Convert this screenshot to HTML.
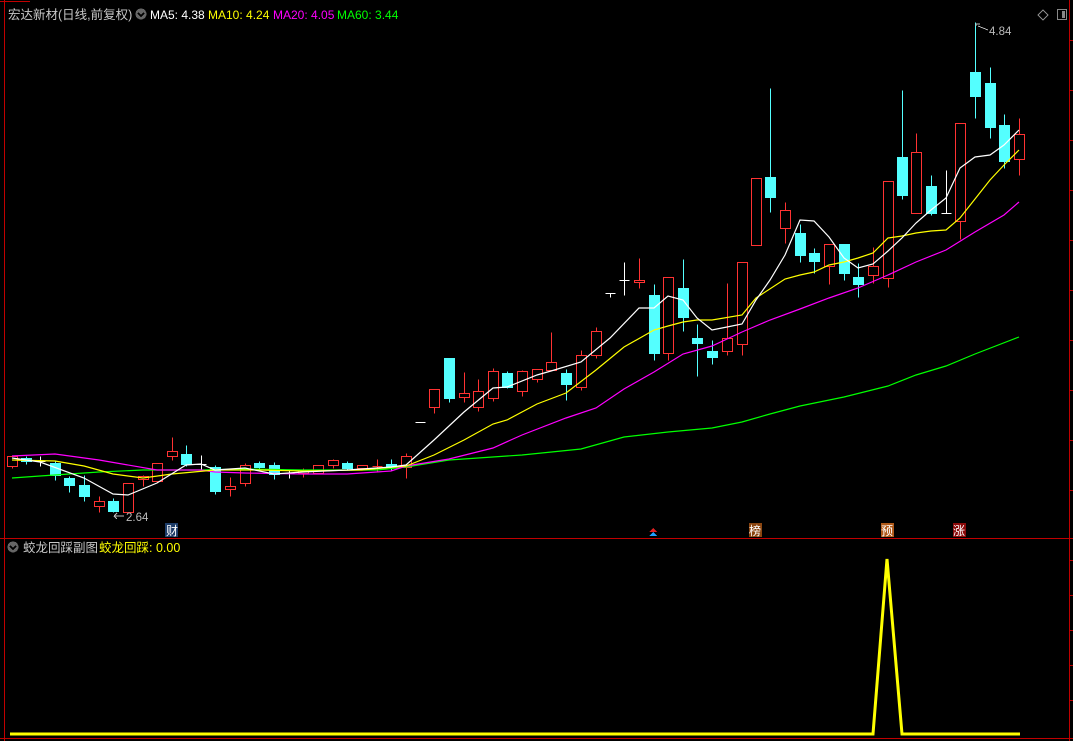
<!DOCTYPE html>
<html><head><meta charset="utf-8"><style>
html,body{margin:0;padding:0;background:#000;width:1073px;height:741px;overflow:hidden}
svg{display:block}
text{font-family:"Liberation Sans","Noto Sans CJK SC",sans-serif}
.r{stroke:#ff3232;fill:none;stroke-width:1}
.rf{stroke:#ff3232;fill:#000;stroke-width:1}
.c{fill:#54ffff;stroke:#54ffff;stroke-width:1}
.w{stroke:#fff;fill:none;stroke-width:1}
</style></head><body>
<svg width="1073" height="741" viewBox="0 0 1073 741" xmlns="http://www.w3.org/2000/svg" shape-rendering="crispEdges">
<rect width="1073" height="741" fill="#000"/>
<line x1="4.5" y1="0" x2="4.5" y2="741" stroke="#c00000"/>
<line x1="1069.5" y1="0" x2="1069.5" y2="741" stroke="#c00000"/>
<line x1="0" y1="538.5" x2="1073" y2="538.5" stroke="#c00000"/>
<line x1="0" y1="738.5" x2="1073" y2="738.5" stroke="#c00000"/>
<line x1="0" y1="1.5" x2="30" y2="1.5" stroke="#c00000"/>
<g stroke="#c00000">
<line x1="1069" y1="40.5" x2="1073" y2="40.5"/><line x1="1069" y1="90.5" x2="1073" y2="90.5"/><line x1="1069" y1="140.5" x2="1073" y2="140.5"/><line x1="1069" y1="190.5" x2="1073" y2="190.5"/><line x1="1069" y1="240.5" x2="1073" y2="240.5"/><line x1="1069" y1="290.5" x2="1073" y2="290.5"/><line x1="1069" y1="340.5" x2="1073" y2="340.5"/><line x1="1069" y1="390.5" x2="1073" y2="390.5"/><line x1="1069" y1="440.5" x2="1073" y2="440.5"/><line x1="1069" y1="490.5" x2="1073" y2="490.5"/>
<line x1="1069" y1="560.5" x2="1073" y2="560.5"/><line x1="1069" y1="595.5" x2="1073" y2="595.5"/><line x1="1069" y1="630.5" x2="1073" y2="630.5"/><line x1="1069" y1="665.5" x2="1073" y2="665.5"/><line x1="1069" y1="700.5" x2="1073" y2="700.5"/>
</g>
<text x="8" y="19" font-size="12.5" fill="#c8c8c8">宏达新材(日线,前复权)</text>
<circle cx="141" cy="14" r="5.5" fill="#666"/><path d="M138 13 L141 16 L144 13" stroke="#000" stroke-width="1.5" fill="none"/>
<text x="150" y="19" font-size="12" fill="#fff">MA5: 4.38</text>
<text x="208" y="19" font-size="12" fill="#ffff00">MA10: 4.24</text>
<text x="273" y="19" font-size="12" fill="#ff00ff">MA20: 4.05</text>
<text x="337" y="19" font-size="12" fill="#00ff00">MA60: 3.44</text>
<path d="M1043 10 L1048 15 L1043 20 L1038 15 Z" stroke="#888" fill="none"/>
<rect x="1057.5" y="9.5" width="9" height="10" stroke="#888" fill="none"/><rect x="1062" y="11" width="3" height="7" fill="#888"/>
<g transform="translate(0.5,0.5)">
<line x1="12" y1="456" x2="12" y2="468" class="r"/><rect x="7" y="456" width="10" height="10" class="rf"/>
<line x1="26" y1="456" x2="26" y2="464" class="c"/><rect x="21" y="458" width="10" height="3" class="c"/>
<line x1="40" y1="456" x2="40" y2="466" class="w"/><line x1="35" y1="461" x2="45" y2="461" class="w"/>
<line x1="55" y1="460" x2="55" y2="480" class="c"/><rect x="50" y="463" width="10" height="12" class="c"/>
<line x1="69" y1="476" x2="69" y2="492" class="c"/><rect x="64" y="478" width="10" height="7" class="c"/>
<line x1="84" y1="475" x2="84" y2="501" class="c"/><rect x="79" y="485" width="10" height="11" class="c"/>
<line x1="99" y1="496" x2="99" y2="512" class="r"/><rect x="94" y="501" width="10" height="5" class="rf"/>
<line x1="113" y1="498" x2="113" y2="512" class="c"/><rect x="108" y="501" width="10" height="10" class="c"/>
<rect x="123" y="483" width="10" height="29" class="rf"/>
<line x1="143" y1="475" x2="143" y2="486" class="r"/><rect x="138" y="476" width="10" height="3" class="rf"/>
<line x1="157" y1="463" x2="157" y2="482" class="r"/><rect x="152" y="463" width="10" height="18" class="rf"/>
<line x1="172" y1="437" x2="172" y2="460" class="r"/><rect x="167" y="451" width="10" height="5" class="rf"/>
<line x1="186" y1="445" x2="186" y2="466" class="c"/><rect x="181" y="454" width="10" height="10" class="c"/>
<line x1="201" y1="455" x2="201" y2="470" class="w"/><line x1="196" y1="464" x2="206" y2="464" class="w"/>
<line x1="215" y1="465" x2="215" y2="494" class="c"/><rect x="210" y="467" width="10" height="24" class="c"/>
<line x1="230" y1="477" x2="230" y2="496" class="r"/><rect x="225" y="486" width="10" height="3" class="rf"/>
<line x1="245" y1="463" x2="245" y2="486" class="r"/><rect x="240" y="465" width="10" height="18" class="rf"/>
<line x1="259" y1="461" x2="259" y2="470" class="c"/><rect x="254" y="463" width="10" height="4" class="c"/>
<line x1="274" y1="462" x2="274" y2="479" class="c"/><rect x="269" y="465" width="10" height="9" class="c"/>
<line x1="289" y1="469" x2="289" y2="478" class="w"/><line x1="284" y1="473" x2="294" y2="473" class="w"/>
<line x1="303" y1="468" x2="303" y2="477" class="r"/><rect x="298" y="470" width="10" height="3" class="rf"/>
<rect x="313" y="465" width="10" height="8" class="rf"/>
<line x1="333" y1="459" x2="333" y2="468" class="r"/><rect x="328" y="460" width="10" height="5" class="rf"/>
<line x1="347" y1="461" x2="347" y2="470" class="c"/><rect x="342" y="463" width="10" height="5" class="c"/>
<rect x="357" y="465" width="10" height="3" class="rf"/>
<line x1="377" y1="459" x2="377" y2="472" class="r"/><line x1="372" y1="466" x2="382" y2="466" class="r"/>
<line x1="391" y1="459" x2="391" y2="470" class="c"/><rect x="386" y="464" width="10" height="2" class="c"/>
<line x1="406" y1="453" x2="406" y2="478" class="r"/><rect x="401" y="456" width="10" height="11" class="rf"/>
<line x1="415" y1="422" x2="425" y2="422" class="w"/>
<line x1="434" y1="389" x2="434" y2="413" class="r"/><rect x="429" y="389" width="10" height="18" class="rf"/>
<line x1="449" y1="358" x2="449" y2="402" class="c"/><rect x="444" y="358" width="10" height="40" class="c"/>
<line x1="464" y1="372" x2="464" y2="402" class="r"/><rect x="459" y="393" width="10" height="4" class="rf"/>
<line x1="478" y1="379" x2="478" y2="411" class="r"/><rect x="473" y="391" width="10" height="16" class="rf"/>
<line x1="493" y1="368" x2="493" y2="401" class="r"/><rect x="488" y="371" width="10" height="27" class="rf"/>
<line x1="507" y1="371" x2="507" y2="388" class="c"/><rect x="502" y="373" width="10" height="14" class="c"/>
<line x1="522" y1="370" x2="522" y2="396" class="r"/><rect x="517" y="371" width="10" height="20" class="rf"/>
<line x1="537" y1="369" x2="537" y2="382" class="r"/><rect x="532" y="369" width="10" height="10" class="rf"/>
<line x1="551" y1="332" x2="551" y2="370" class="r"/><rect x="546" y="362" width="10" height="8" class="rf"/>
<line x1="566" y1="369" x2="566" y2="400" class="c"/><rect x="561" y="373" width="10" height="11" class="c"/>
<line x1="581" y1="350" x2="581" y2="390" class="r"/><rect x="576" y="355" width="10" height="32" class="rf"/>
<line x1="596" y1="327" x2="596" y2="358" class="r"/><rect x="591" y="331" width="10" height="24" class="rf"/>
<line x1="610" y1="293" x2="610" y2="297" class="w"/><line x1="605" y1="293" x2="615" y2="293" class="w"/>
<line x1="624" y1="262" x2="624" y2="295" class="w"/><line x1="619" y1="280" x2="629" y2="280" class="w"/>
<line x1="639" y1="258" x2="639" y2="288" class="r"/><rect x="634" y="280" width="10" height="2" class="rf"/>
<line x1="654" y1="284" x2="654" y2="360" class="c"/><rect x="649" y="295" width="10" height="58" class="c"/>
<line x1="668" y1="277" x2="668" y2="360" class="r"/><rect x="663" y="277" width="10" height="76" class="rf"/>
<line x1="683" y1="259" x2="683" y2="331" class="c"/><rect x="678" y="288" width="10" height="29" class="c"/>
<line x1="697" y1="324" x2="697" y2="376" class="c"/><rect x="692" y="338" width="10" height="5" class="c"/>
<line x1="712" y1="340" x2="712" y2="364" class="c"/><rect x="707" y="351" width="10" height="6" class="c"/>
<line x1="727" y1="283" x2="727" y2="355" class="r"/><rect x="722" y="338" width="10" height="13" class="rf"/>
<line x1="742" y1="262" x2="742" y2="355" class="r"/><rect x="737" y="262" width="10" height="82" class="rf"/>
<rect x="751" y="178" width="10" height="67" class="rf"/>
<line x1="770" y1="88" x2="770" y2="212" class="c"/><rect x="765" y="177" width="10" height="20" class="c"/>
<line x1="785" y1="202" x2="785" y2="243" class="r"/><rect x="780" y="210" width="10" height="18" class="rf"/>
<line x1="800" y1="224" x2="800" y2="262" class="c"/><rect x="795" y="233" width="10" height="22" class="c"/>
<line x1="814" y1="248" x2="814" y2="273" class="c"/><rect x="809" y="253" width="10" height="8" class="c"/>
<line x1="829" y1="244" x2="829" y2="284" class="r"/><rect x="824" y="244" width="10" height="22" class="rf"/>
<line x1="844" y1="244" x2="844" y2="280" class="c"/><rect x="839" y="244" width="10" height="29" class="c"/>
<line x1="858" y1="263" x2="858" y2="297" class="c"/><rect x="853" y="277" width="10" height="7" class="c"/>
<line x1="873" y1="247" x2="873" y2="283" class="r"/><rect x="868" y="266" width="10" height="9" class="rf"/>
<line x1="888" y1="181" x2="888" y2="287" class="r"/><rect x="883" y="181" width="10" height="97" class="rf"/>
<line x1="902" y1="90" x2="902" y2="199" class="c"/><rect x="897" y="157" width="10" height="38" class="c"/>
<line x1="916" y1="133" x2="916" y2="213" class="r"/><rect x="911" y="152" width="10" height="61" class="rf"/>
<line x1="931" y1="175" x2="931" y2="215" class="c"/><rect x="926" y="186" width="10" height="27" class="c"/>
<line x1="946" y1="170" x2="946" y2="213" class="w"/><line x1="941" y1="213" x2="951" y2="213" class="w"/>
<line x1="960" y1="123" x2="960" y2="239" class="r"/><rect x="955" y="123" width="10" height="98" class="rf"/>
<line x1="975" y1="22" x2="975" y2="118" class="c"/><rect x="970" y="72" width="10" height="24" class="c"/>
<line x1="990" y1="67" x2="990" y2="138" class="c"/><rect x="985" y="83" width="10" height="44" class="c"/>
<line x1="1004" y1="114" x2="1004" y2="168" class="c"/><rect x="999" y="125" width="10" height="36" class="c"/>
<line x1="1019" y1="118" x2="1019" y2="175" class="r"/><rect x="1014" y="134" width="10" height="25" class="rf"/>
</g>
<g fill="none" stroke-width="1.2" shape-rendering="auto">
<polyline stroke="#00ff00" points="12,478 40,476 99,472 143,470 201,470 245,469 303,470 377,470 406,467 449,460 522,455 581,449 624,437 668,432 712,428 742,422 770,414 800,406 844,397 888,386 916,375 946,366 975,354 1019,337"/>
<polyline stroke="#ff00ff" points="12,456 55,454 99,460 157,470 201,470 215,472 245,473 303,474 347,474 391,471 406,466 449,459 493,448 522,435 566,418 596,408 624,389 654,372 683,354 712,346 742,332 770,320 800,309 829,298 858,288 888,275 916,262 946,250 975,232 1004,215 1019,202"/>
<polyline stroke="#ffff00" points="12,460 55,461 84,466 113,474 143,478 172,474 215,470 259,470 303,471 362,470 406,466 434,455 464,440 493,424 507,420 537,404 566,393 596,370 624,347 654,330 668,326 683,322 697,320 712,320 742,315 756,298 785,279 800,275 814,272 829,265 844,262 858,258 873,253 888,238 902,236 916,233 931,231 946,230 960,218 975,199 990,180 1004,165 1019,150"/>
<polyline stroke="#ffffff" points="12,458 40,462 84,478 113,494 128,495 157,483 186,465 201,464 215,470 245,468 274,474 303,472 347,470 391,467 406,465 434,440 464,412 493,388 507,387 537,375 551,371 581,362 610,338 639,308 654,308 668,296 683,300 697,318 712,330 727,327 742,324 756,300 770,280 785,255 800,220 814,221 829,237 844,258 858,268 873,264 888,251 902,238 916,223 931,210 946,198 960,168 975,157 990,155 1004,145 1019,130"/>
</g>
<path d="M114 516 L124 516 M114 516 L117 513 M114 516 L117 519" stroke="#bbb" fill="none"/>
<text x="126" y="521" font-size="11.5" fill="#bbb">2.64</text>
<path d="M976 26 L976 24 L980 24 M978 26 L988 30" stroke="#bbb" fill="none"/>
<text x="989" y="35" font-size="11.5" fill="#bbb">4.84</text>
<rect x="165" y="523" width="13" height="14" fill="#1c3c68"/><text x="166" y="535" font-size="12" fill="#fff">财</text>
<path d="M649 532 L653 528 L657 532 Z" fill="#e02020"/><path d="M649 536 L653 532 L657 536 Z" fill="#20a0ff"/>
<rect x="749" y="523" width="13" height="14" fill="#8a4510"/><text x="749" y="535" font-size="12" fill="#fff">榜</text>
<rect x="881" y="523" width="13" height="14" fill="#b05a1a"/><text x="881" y="535" font-size="12" fill="#fff">预</text>
<rect x="953" y="523" width="13" height="14" fill="#8a0a0a"/><text x="953" y="535" font-size="12" fill="#fff">涨</text>
<circle cx="13" cy="547" r="5.5" fill="#666"/><path d="M10 546 L13 549 L16 546" stroke="#000" stroke-width="1.5" fill="none"/>
<text x="23" y="552" font-size="12.5" fill="#c8c8c8">蛟龙回踩副图</text>
<text x="99" y="552" font-size="12.5" fill="#ffff00">蛟龙回踩: 0.00</text>
<polyline fill="none" stroke="#ffff00" stroke-width="3" shape-rendering="auto" points="10,734 873,734 887,559 902,734 1020,734"/>
</svg>
</body></html>
